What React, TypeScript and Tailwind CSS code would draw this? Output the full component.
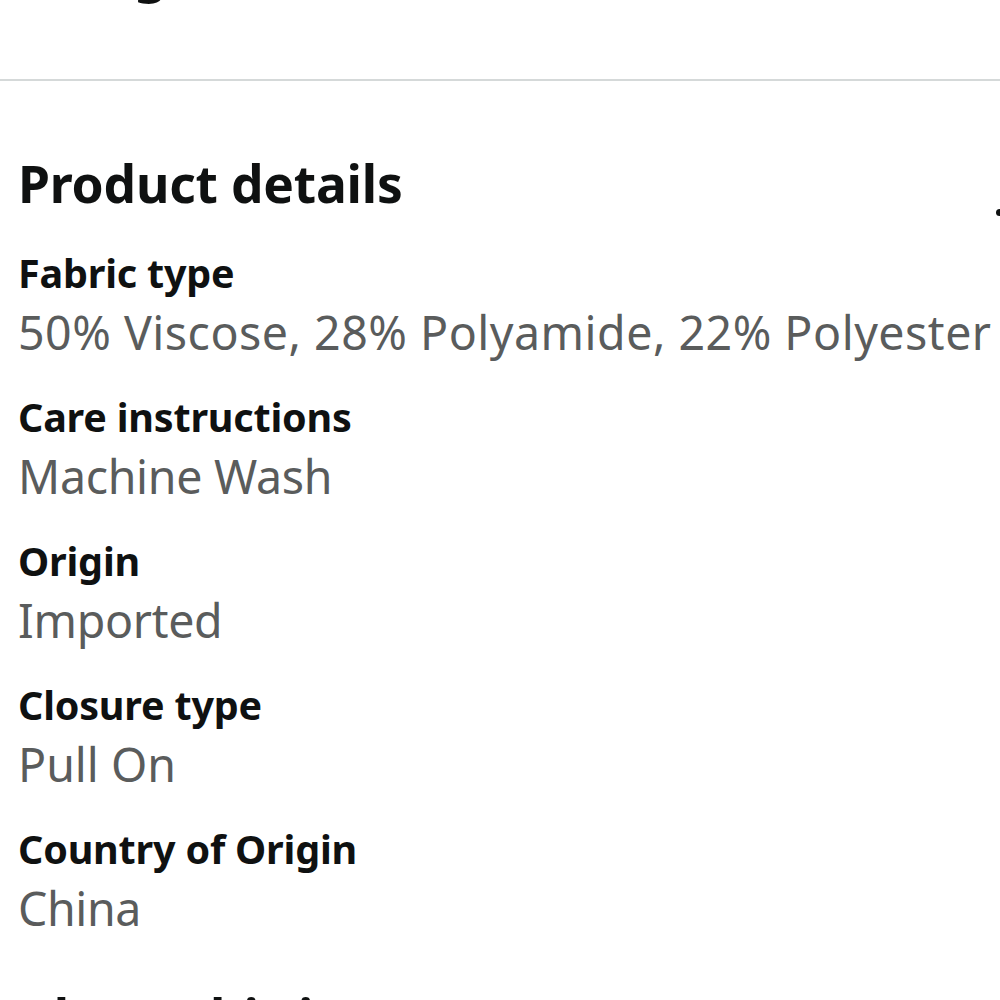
export default function App() {
  const rows: [string, string, string][] = [
    ["Fabric type", "50% Viscose, 28% Polyamide, 22% Polyester", "tracking-[0.5px]"],
    ["Care instructions", "Machine Wash", "tracking-[-0.3px]"],
    ["Origin", "Imported", "tracking-[-0.3px]"],
    ["Closure type", "Pull On", ""],
    ["Country of Origin", "China", "tracking-[-0.4px]"],
  ];
  return (
    <div className="w-[1000px] h-[1000px] overflow-hidden bg-white text-[#0f1111]" style={{ fontFamily: '"Noto Sans", Arial, sans-serif' }}>
      <div className="h-[79px] relative">
        <div className="absolute left-[134px] -top-[55px] text-[52px] font-bold leading-none">g</div>
      </div>
      <div className="h-[2px] bg-[#d5d9d9]" />
      <div className="pt-[72px] pl-[18px] relative">
        <h2 className="text-[51.5px] font-bold leading-[60px] tracking-[-0.2px]">Product details</h2>
        <div className="absolute right-0 top-[128px] w-[4px] h-[7px] bg-[#0f1111] rounded-l-full" />
        <div className="mt-[36px] flex flex-col gap-[26px]">
          {rows.map(([k, v, t]) => (
            <div key={k} className="flex flex-col">
              <div className="text-[39.5px] font-bold leading-[48px] tracking-[-0.2px]">{k}</div>
              <div className={`text-[46.5px] leading-[70px] text-[#5a5c5c] whitespace-nowrap ${t}`}>{v}</div>
            </div>
          ))}
          <div className="mt-[18px] text-[51.5px] font-bold leading-[60px]">About this item</div>
        </div>
      </div>
    </div>
  );
}
